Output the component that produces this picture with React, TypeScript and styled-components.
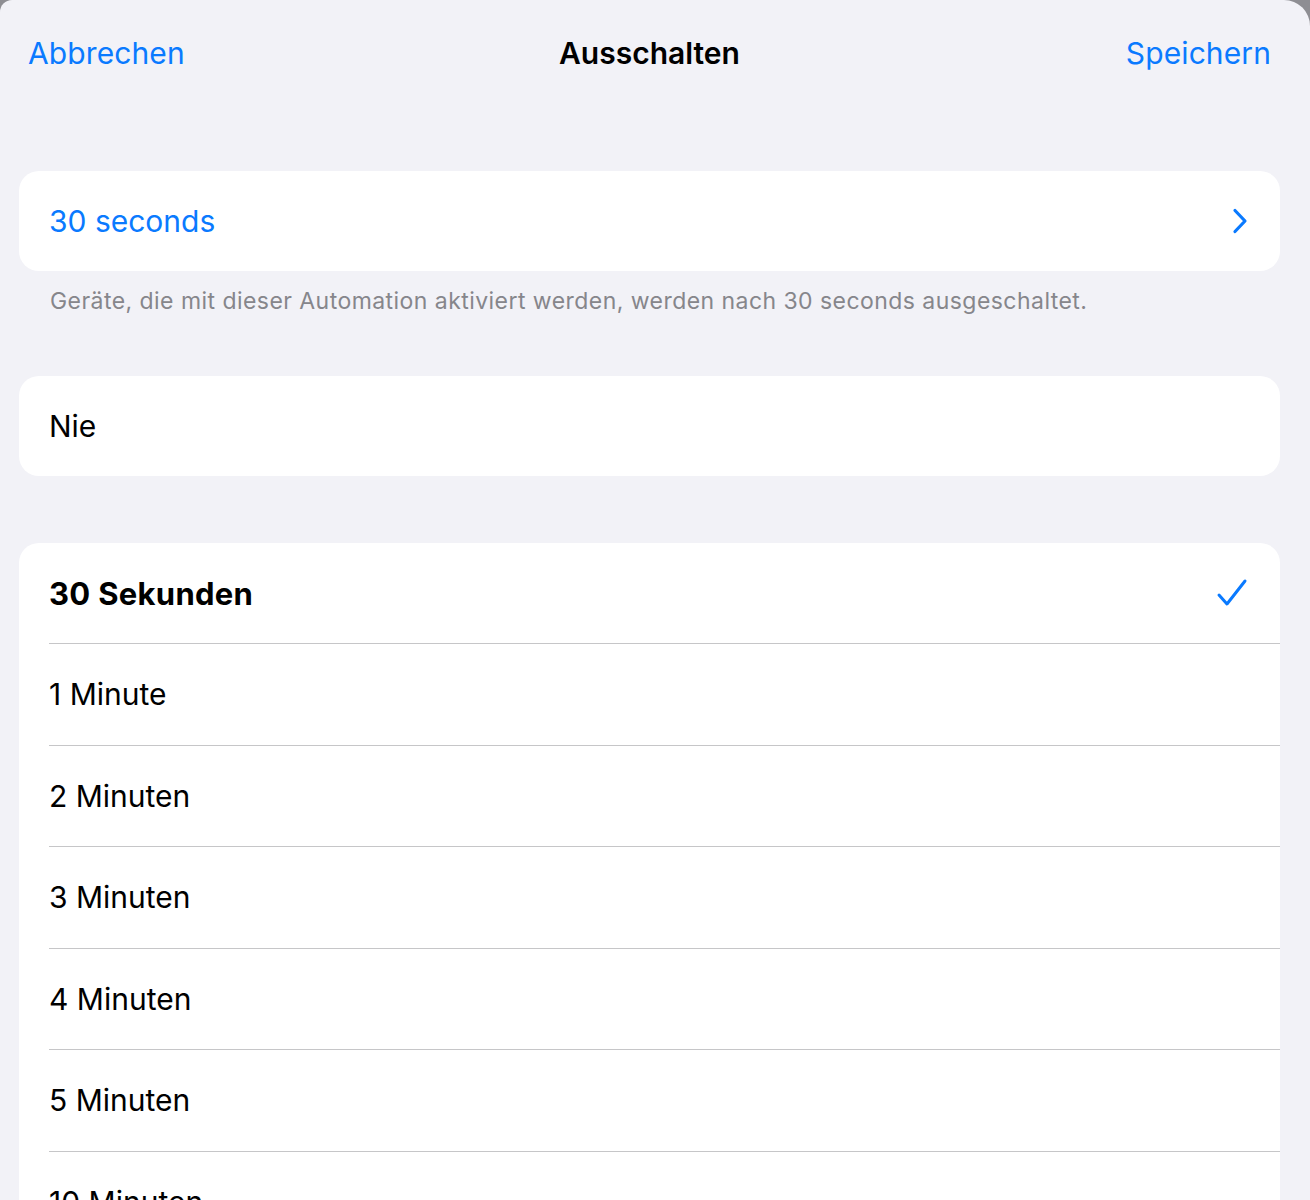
import { FC } from "react";
import styled, { createGlobalStyle } from "styled-components";

const GlobalStyle = createGlobalStyle`
    html, body {
        margin: 0;
        padding: 0;
        background: #8e8e93;
    }
    body {
        font-family: Inter, "Noto Sans", "Liberation Sans", sans-serif;
        -webkit-font-smoothing: antialiased;
    }
`;

const options = [
    "30 Sekunden",
    "1 Minute",
    "2 Minuten",
    "3 Minuten",
    "4 Minuten",
    "5 Minuten",
    "10 Minuten",
];

const ChevronIcon: FC = () => (
    <svg width="16" height="26" viewBox="0 0 16 26" fill="none">
        <path
            d="M3 2.5 L13 13 L3 23.5"
            stroke="#0a7aff"
            strokeWidth="3.2"
            strokeLinecap="round"
            strokeLinejoin="round"
        />
    </svg>
);

const CheckIcon: FC = () => (
    <svg width="32" height="30" viewBox="0 0 32 30" fill="none">
        <path
            d="M3 17 L11 26 L29 3"
            stroke="#0a7aff"
            strokeWidth="3"
            strokeLinecap="round"
            strokeLinejoin="round"
        />
    </svg>
);

export default function App() {
    const selected = "30 Sekunden";

    return (
        <>
            <GlobalStyle />
            <Sheet>
                <NavBar>
                    <NavButton>Abbrechen</NavButton>
                    <Title>Ausschalten</Title>
                    <NavButton $align="right">Speichern</NavButton>
                </NavBar>

                <Section $top={65}>
                    <Card>
                        <Row>
                            <RowLabel $accent>30 seconds</RowLabel>
                            <ChevronIcon />
                        </Row>
                    </Card>
                    <Footer>
                        Geräte, die mit dieser Automation aktiviert werden, werden
                        nach 30 seconds ausgeschaltet.
                    </Footer>
                </Section>

                <Section $top={61}>
                    <Card>
                        <Row>
                            <RowLabel>Nie</RowLabel>
                        </Row>
                    </Card>
                </Section>

                <Section $top={67}>
                    <Card>
                        {options.map((name, i) => (
                            <Row key={name} $divider={i > 0}>
                                <RowLabel $bold={name === selected}>
                                    {name}
                                </RowLabel>
                                {name === selected && <CheckIcon />}
                            </Row>
                        ))}
                    </Card>
                </Section>
            </Sheet>
        </>
    );
}

const Sheet = styled.div`
    background: #f2f2f7;
    min-height: 1200px;
    border-top-left-radius: 12px;
    border-top-right-radius: 26px;
    overflow: hidden;
    padding: 0 30px 0 19px;
`;

const NavBar = styled.div`
    display: grid;
    grid-template-columns: 1fr auto 1fr;
    align-items: center;
    height: 106px;
    padding: 0 9px;
`;

const NavButton = styled.div<{ $align?: "right" }>`
    color: #0a7aff;
    font-size: 30px;
    letter-spacing: 0.1px;
    text-align: ${(p) => (p.$align === "right" ? "right" : "left")};
`;

const Title = styled.div`
    color: #000;
    font-size: 30px;
    font-weight: 600;
`;

const Section = styled.div<{ $top: number }>`
    margin-top: ${(p) => p.$top}px;
`;

const Card = styled.div`
    background: #fff;
    border-radius: 20px;
    overflow: hidden;
    width: 1261px;
`;

const Row = styled.div<{ $divider?: boolean }>`
    display: flex;
    align-items: center;
    justify-content: space-between;
    height: 101.5px;
    margin-left: 30px;
    padding-right: 32px;
    box-sizing: border-box;
    border-top: ${(p) => (p.$divider ? "1px solid #c6c6c8" : "none")};
    &:first-child {
        height: 100px;
    }
`;

const RowLabel = styled.span<{ $accent?: boolean; $bold?: boolean }>`
    font-size: ${(p) => (p.$bold ? 31 : 30)}px;
    color: ${(p) => (p.$accent ? "#0a7aff" : "#000")};
    font-weight: ${(p) => (p.$bold ? 700 : 400)};
    letter-spacing: ${(p) => (p.$bold ? 0.3 : 0)}px;
`;

const Footer = styled.div`
    color: #86868b;
    font-size: 23px;
    line-height: 28px;
    padding: 16px 31px 0;
    letter-spacing: 0.45px;
`;
